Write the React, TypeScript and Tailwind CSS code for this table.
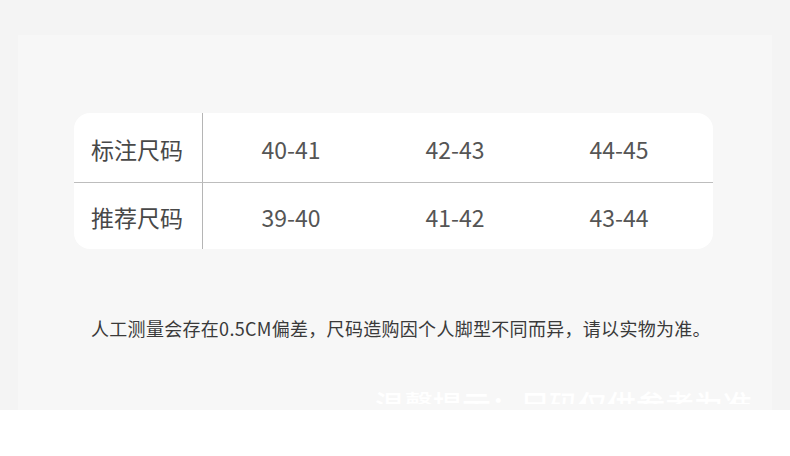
const rows = [
  { label: "标注尺码", sizes: ["40-41", "42-43", "44-45"] },
  { label: "推荐尺码", sizes: ["39-40", "41-42", "43-44"] },
];

const font = { fontFamily: '"Noto Sans CJK SC", "Noto Sans", sans-serif' };

export default function App() {
  return (
    <div className="w-[790px] h-[456px] bg-white flex flex-col" style={font}>
      <div className="h-[410px] bg-[#f4f4f4] pt-[35px] px-[18px] overflow-hidden">
        <div className="h-full bg-[#f7f7f7] flex flex-col pt-[78px] pl-[56px]">
          {/* size table */}
          <div className="w-[639px] bg-white rounded-[16px] flex flex-col">
            {rows.map((row, i) => (
              <div
                key={row.label}
                className={
                  i === 0
                    ? "flex h-[70px] pt-[3px] border-b border-[#bdbdbd]"
                    : "flex h-[66px] pt-[3px]"
                }
              >
                <div className="w-[129px] shrink-0 border-r border-[#b5b5b5] -mt-[3px] pt-[3px] flex items-center pl-[17px] text-[23px] text-[#484848]">
                  {row.label}
                </div>
                <div className="flex pl-[6px] items-center">
                  {row.sizes.map((s) => (
                    <div key={s} className="w-[164px] text-center text-[23px] text-[#555555]">
                      {s}
                    </div>
                  ))}
                </div>
              </div>
            ))}
          </div>

          <p className="mt-[67px] ml-[17px] text-[18px] leading-[24px] tracking-[0.3px] text-[#3a3a3a]">
            人工测量会存在0.5CM偏差，尺码造购因个人脚型不同而异，请以实物为准。
          </p>

          <div className="mt-[44px] ml-[301px] h-[20px] overflow-hidden">
            <div className="text-[29px] leading-[40px] font-medium text-white whitespace-nowrap">
              温馨提示：尺码仅供参考为准
            </div>
          </div>
        </div>
      </div>
    </div>
  );
}
